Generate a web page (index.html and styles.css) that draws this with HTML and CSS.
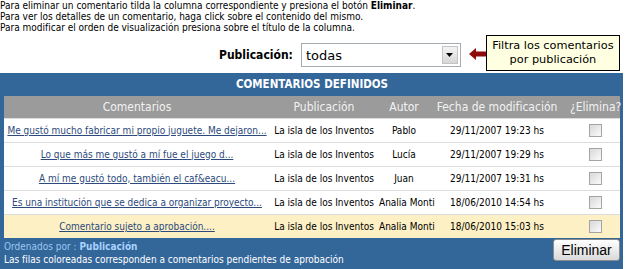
FILE: index.html
```html
<!DOCTYPE html>
<html lang="es">
<head>
    <meta charset="UTF-8">
    <title>Comentarios definidos</title>
    <link rel="stylesheet" href="styles.css">
</head>
<body>
    <p class="help">
        Para eliminar un comentario tilda la columna correspondiente y presiona el botón <b>Eliminar</b>.<br>
        Para ver los detalles de un comentario, haga click sobre el contenido del mismo.<br>
        Para modificar el orden de visualización presiona sobre el título de la columna.
    </p>

    <div class="filter">
        <label class="filter-label" for="pub">Publicación:</label>
        <div class="combo" id="pub">
            <span class="combo-value">todas</span>
            <span class="combo-btn">
                <svg width="7" height="4" viewBox="0 0 7 4"><path d="M0 0 H7 L3.5 4 Z" fill="#000"/></svg>
            </span>
        </div>
        <svg class="hint-arrow" width="17" height="12" viewBox="0 0 17 12">
            <path d="M0 6 L7 0 L7 3.5 L17 3.5 L17 8.5 L7 8.5 L7 12 Z" fill="#8e0b0b"/>
        </svg>
        <div class="hint">Filtra los comentarios<br>por publicación</div>
    </div>

    <div class="panel">
        <div class="panel-title">COMENTARIOS DEFINIDOS</div>
        <table class="grid">
            <colgroup>
                <col class="c-text">
                <col class="c-pub">
                <col class="c-author">
                <col class="c-date">
                <col class="c-del">
            </colgroup>
            <thead>
                <tr>
                    <th>Comentarios</th>
                    <th>Publicación</th>
                    <th>Autor</th>
                    <th>Fecha de modificación</th>
                    <th class="del">¿Elimina?</th>
                </tr>
            </thead>
            <tbody>
                <tr>
                    <td><a href="#">Me gustó mucho fabricar mi propio juguete. Me dejaron...</a></td>
                    <td>La isla de los Inventos</td>
                    <td>Pablo</td>
                    <td>29/11/2007 19:23 hs</td>
                    <td class="del"><input type="checkbox"></td>
                </tr>
                <tr>
                    <td><a href="#">Lo que más me gustó a mí fue el juego d...</a></td>
                    <td>La isla de los Inventos</td>
                    <td>Lucía</td>
                    <td>29/11/2007 19:29 hs</td>
                    <td class="del"><input type="checkbox"></td>
                </tr>
                <tr>
                    <td><a href="#">A mí me gustó todo, también el caf&amp;eacu...</a></td>
                    <td>La isla de los Inventos</td>
                    <td>Juan</td>
                    <td>29/11/2007 19:31 hs</td>
                    <td class="del"><input type="checkbox"></td>
                </tr>
                <tr>
                    <td><a href="#">Es una institución que se dedica a organizar proyecto...</a></td>
                    <td>La isla de los Inventos</td>
                    <td>Analia Monti</td>
                    <td>18/06/2010 14:54 hs</td>
                    <td class="del"><input type="checkbox"></td>
                </tr>
                <tr class="pending">
                    <td><a href="#">Comentario sujeto a aprobación....</a></td>
                    <td>La isla de los Inventos</td>
                    <td>Analia Monti</td>
                    <td>18/06/2010 15:03 hs</td>
                    <td class="del"><input type="checkbox"></td>
                </tr>
            </tbody>
        </table>
        <div class="panel-foot">
            <div class="foot-notes">
                <div class="order">Ordenados por : <b>Publicación</b></div>
                <div>Las filas coloreadas corresponden a comentarios pendientes de aprobación</div>
            </div>
            <button class="btn">Eliminar</button>
        </div>
    </div>
</body>
</html>
```

FILE: styles.css
```css
* {
    box-sizing: border-box;
}

body {
    margin: 0;
    font-family: "DejaVu Sans Condensed", "DejaVu Sans", sans-serif;
    font-stretch: condensed;
    color: #000;
    background: #fff;
}

.help {
    margin: 0;
    font-size: 10px;
    line-height: 11px;
}

/* filtro */
.filter {
    display: flex;
    align-items: center;
    height: 40px;
    padding-left: 219px;
}

.filter-label {
    font-weight: bold;
    font-size: 12px;
    margin-top: 4px;
    margin-right: 8px;
    flex-shrink: 0;
}

.combo {
    width: 160px;
    height: 24px;
    margin-top: 4px;
    border: 1px solid #a5acb2;
    display: flex;
    align-items: center;
    padding-left: 4px;
    font-family: "DejaVu Sans", sans-serif;
    font-stretch: normal;
    font-size: 13px;
    flex-shrink: 0;
}

.combo-value {
    flex: 1;
}

.combo-btn {
    width: 16px;
    height: 18px;
    margin-right: 2px;
    border: 1px solid #c3c3c3;
    background: linear-gradient(#f4f4f4, #d6d6d6);
    display: flex;
    align-items: center;
    justify-content: center;
}

.hint-arrow {
    margin-left: 8px;
    margin-top: 2px;
    flex-shrink: 0;
}

.hint {
    background: #ffffe1;
    border: 1px solid #000;
    padding: 3px 2px;
    width: 134px;
    flex-shrink: 0;
    font-family: "DejaVu Sans", sans-serif;
    font-stretch: normal;
    font-size: 11.3px;
    line-height: 14px;
    text-align: center;
}

/* panel */
.panel {
    width: 623px;
    background: #336699;
    padding: 0 3px 0 4px;
}

.panel-title {
    height: 23px;
    line-height: 23px;
    text-align: center;
    color: #fff;
    font-weight: bold;
    font-size: 11.5px;
}

.grid {
    width: 100%;
    border-collapse: collapse;
    table-layout: fixed;
}

.c-text { width: 266px; }
.c-pub { width: 108px; }
.c-author { width: 52px; }
.c-date { width: 134px; }
.c-del { width: 56px; }

.grid th {
    background: #9b9b9b;
    color: #f2f2f2;
    font-weight: normal;
    font-size: 12px;
    height: 22px;
    padding: 0;
    white-space: nowrap;
}

.grid th.del {
    padding-left: 6px;
}

.grid td {
    background: #fff;
    height: 24px;
    border-top: 1px solid #dcdcdc;
    font-size: 10px;
    text-align: center;
    padding: 0 1px;
    white-space: nowrap;
}

.grid tr.pending td {
    background: #fdf0c5;
}

.grid td.del {
    padding-left: 8px;
}

.grid a {
    color: #2c4a7c;
}

.grid input[type="checkbox"] {
    appearance: none;
    width: 13px;
    height: 13px;
    margin: 0;
    vertical-align: middle;
    border: 1px solid #a4a4a4;
    background: linear-gradient(135deg, #d8d8d8, #fafafa);
}

.panel-foot {
    display: flex;
    justify-content: space-between;
    align-items: flex-start;
    height: 31px;
}

.foot-notes {
    color: #fff;
    font-size: 10px;
    line-height: 13px;
    padding-top: 2px;
}

.order {
    color: #9cc6f2;
}

.order b {
    color: #a9d2ff;
}

.btn {
    margin-top: 1px;
    width: 67px;
    height: 22px;
    font-family: "Liberation Sans", sans-serif;
    font-size: 14px;
    color: #000;
    border: 1px solid #8c8c8c;
    border-radius: 3px;
    background: linear-gradient(#ffffff, #d9d9d9);
    padding: 0;
}
```
